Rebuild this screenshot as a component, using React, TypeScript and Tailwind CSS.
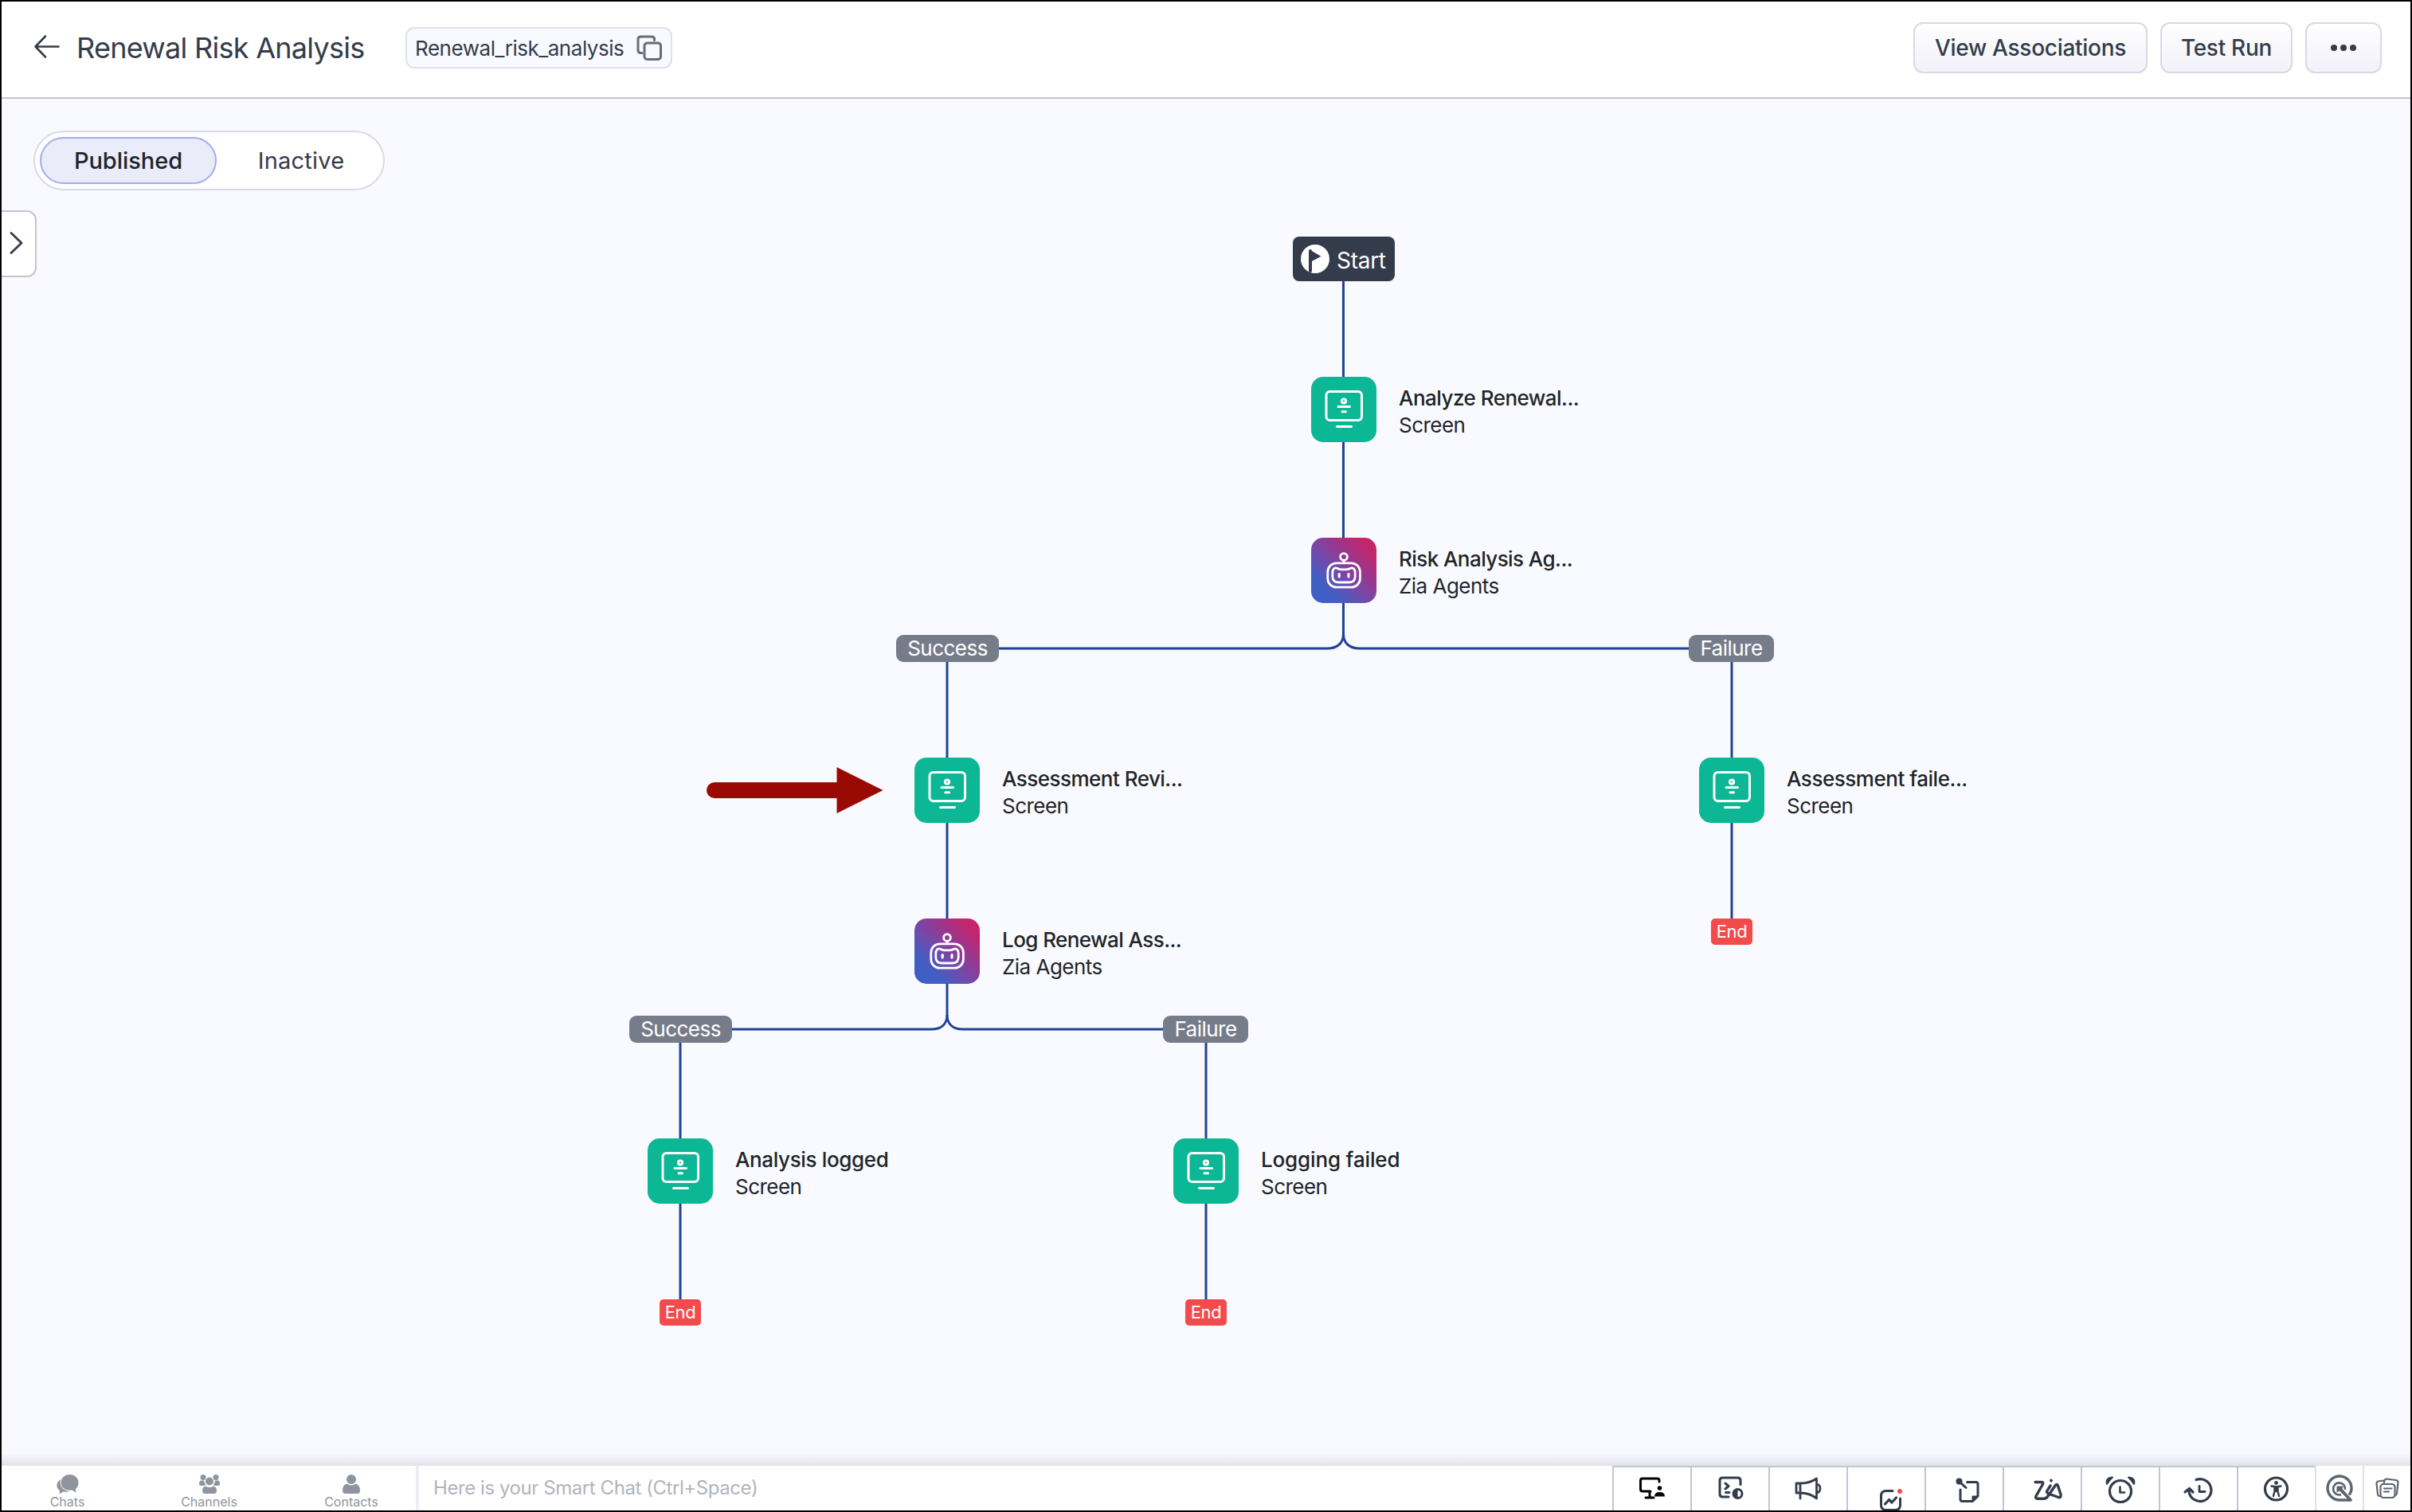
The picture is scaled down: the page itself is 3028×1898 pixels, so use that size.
import { type ReactNode } from "react";
import { clsx } from "clsx";

type NodeKind = "screen" | "agent";

const nodes: { x: number; y: number; kind: NodeKind; title: string; sub: string; tracking: string }[] = [
  { x: 1644, y: 349, kind: "screen", title: "Analyze Renewal...", sub: "Screen", tracking: "tracking-[-0.02em]" },
  { x: 1644, y: 551, kind: "agent", title: "Risk Analysis Ag...", sub: "Zia Agents", tracking: "tracking-[-0.022em]" },
  { x: 1146, y: 827, kind: "screen", title: "Assessment Revi...", sub: "Screen", tracking: "tracking-[-0.02em]" },
  { x: 2131, y: 827, kind: "screen", title: "Assessment faile...", sub: "Screen", tracking: "tracking-[-0.018em]" },
  { x: 1146, y: 1029, kind: "agent", title: "Log Renewal Ass...", sub: "Zia Agents", tracking: "tracking-[-0.022em]" },
  { x: 811, y: 1305, kind: "screen", title: "Analysis logged", sub: "Screen", tracking: "tracking-[-0.014em]" },
  { x: 1471, y: 1305, kind: "screen", title: "Logging failed", sub: "Screen", tracking: "tracking-[-0.006em]" },
];

const branches = [
  { x: 1123, y: 673, w: 129, label: "Success" },
  { x: 2118, y: 673, w: 107, label: "Failure" },
  { x: 788, y: 1151, w: 129, label: "Success" },
  { x: 1458, y: 1151, w: 107, label: "Failure" },
];

const ends = [
  { x: 2146, y: 1029 },
  { x: 826, y: 1507 },
  { x: 1486, y: 1507 },
];

const edges = [
  "M1684.5 229V349",
  "M1684.5 431V551",
  "M1684.5 633V672C1684.5 684 1676 690 1664 690H1252",
  "M1684.5 672C1684.5 684 1693 690 1705 690H2118",
  "M1187 707V827",
  "M1187 909V1029",
  "M2172 707V827",
  "M2172 909V1029",
  "M1187 1111V1150C1187 1162 1179 1168 1167 1168H917",
  "M1187 1150C1187 1162 1195 1168 1207 1168H1458",
  "M852 1185V1305",
  "M852 1387V1507",
  "M1512 1185V1305",
  "M1512 1387V1507",
];

function ScreenIcon() {
  return (
    <svg width="82" height="82" viewBox="0 0 82 82" fill="none" stroke="white" strokeWidth="3" strokeLinecap="round">
      <rect x="19" y="18.5" width="44.5" height="36" rx="4.5" />
      <circle cx="41" cy="30.5" r="2.6" />
      <path d="M34 37.5H48.5M39 43.8H43.5M32.5 62.5H50.5" />
    </svg>
  );
}

function AgentIcon() {
  return (
    <svg width="82" height="82" viewBox="0 0 82 82" fill="none" stroke="white" strokeWidth="2.8" strokeLinecap="round">
      <circle cx="41" cy="24" r="4.4" />
      <path d="M41 28.5V31" />
      <rect x="20.8" y="31.8" width="40.6" height="30.4" rx="11" />
      <path d="M33 38.5C36 40.4 46 40.4 49 38.5C53 36.6 55.2 40 55.2 44V48.5Q55.2 56 48 56H34Q26.8 56 26.8 48.5V44C26.8 40 29 36.6 33 38.5Z" />
      <path d="M35.2 45.5V49M47 45.5V49" strokeWidth="3.2" />
    </svg>
  );
}

function FlowNode({ x, y, kind, title, sub, tracking }: (typeof nodes)[number]) {
  return (
    <div className="absolute flex gap-7" style={{ left: x, top: y }}>
      <div
        className={clsx(
          "size-[82px] shrink-0 rounded-[15px]",
          kind === "screen"
            ? "bg-[#0bb795]"
            : "bg-[linear-gradient(45deg,#3f5fc4_22%,#6e4cad_42%,#913a94_60%,#c4256b_86%)]"
        )}
      >
        {kind === "screen" ? <ScreenIcon /> : <AgentIcon />}
      </div>
      <div className="pt-[10px] text-[26px] leading-[34px] whitespace-nowrap text-[#212529]">
        <p className={clsx("font-medium", tracking)}>{title}</p>
        <p className="tracking-[-0.02em]">{sub}</p>
      </div>
    </div>
  );
}

function Header() {
  return (
    <header className="flex h-[122px] shrink-0 items-center border-b-2 border-[#c4c3d6] bg-white pr-9 pb-1 pl-10 text-[#343c4b]">
      <div className="flex flex-1 items-center">
        <svg className="mb-1" width="34" height="32" viewBox="0 0 34 32" fill="none" stroke="#343c4b" strokeWidth="2.6" strokeLinecap="round" strokeLinejoin="round">
          <path d="M15 3.5L2.5 16.5L15 29.5M2.5 16.5H31.5" />
        </svg>
        <h1 className="ml-[20px] w-[413px] text-[36px] leading-[44px] tracking-[-0.02em] whitespace-nowrap">Renewal Risk Analysis</h1>
        <div className="flex h-[52px] w-[335px] items-center justify-between rounded-[11px] border-2 border-[#dfe1e9] bg-[#f9faff] pr-[10px] pl-[10px]">
          <span className="text-[26px] tracking-[-0.018em] whitespace-nowrap">Renewal_risk_analysis</span>
          <svg width="34" height="34" viewBox="0 0 34 34" fill="none" stroke="#666d7a" strokeWidth="3" strokeLinecap="round">
            <path d="M8 23.5H6.5Q3 23.5 3 20V6Q3 3 6.5 3H20Q23.5 3 23.5 6V7.5" />
            <rect x="11" y="11" width="20.5" height="20.5" rx="3.5" />
          </svg>
        </div>
      </div>
      <div className="flex gap-4">
        <HeaderButton className="w-[294px]">View Associations</HeaderButton>
        <HeaderButton className="w-[166px]">Test Run</HeaderButton>
        <HeaderButton className="w-[96px] gap-1">
          <i className="size-2 rounded-full bg-[#343c4b]" />
          <i className="size-2 rounded-full bg-[#343c4b]" />
          <i className="size-2 rounded-full bg-[#343c4b]" />
        </HeaderButton>
      </div>
    </header>
  );
}

function HeaderButton({ className, children }: { className: string; children: ReactNode }) {
  return (
    <button
      className={clsx(
        "flex h-16 items-center justify-center rounded-xl border-2 border-[#d9d8e8] bg-linear-to-b from-white to-[#f1f1f8] text-[28px] font-medium tracking-[-0.01em] whitespace-nowrap",
        className
      )}
    >
      {children}
    </button>
  );
}

function Canvas() {
  return (
    <main className="relative flex-1 overflow-hidden bg-[#f9faff]">
      <div className="ml-10 flex pt-10">
        <div className="flex h-[75px] w-[441px] items-center rounded-full border-2 border-[#dad9e8] bg-white px-[6px] text-[29px] text-[#343c4b]">
          <span className="flex h-[59px] w-[222px] items-center justify-center rounded-full border-2 border-[#a9a8f0] bg-[#ebecfa] font-medium tracking-[-0.002em] text-[#212529]">
            Published
          </span>
          <span className="flex-1 pl-[9px] text-center tracking-[0.007em]">Inactive</span>
        </div>
      </div>
      <button className="mt-[25px] flex h-[84px] w-11 items-center rounded-r-xl border-2 border-l-0 border-[#c4c3d6] bg-white pb-[3px] pl-[9px]">
        <svg width="20" height="32" viewBox="0 0 20 32" fill="none" stroke="#343c4b" strokeWidth="2.8" strokeLinecap="round" strokeLinejoin="round">
          <path d="M3 3.5L16 16L3 28.5" />
        </svg>
      </button>

      <svg className="absolute top-0 left-0" width="3024" height="1716" viewBox="0 0 3024 1716" fill="none">
        <g stroke="#204297" strokeWidth="3">
          {edges.map((d) => (
            <path key={d} d={d} />
          ))}
        </g>
        <path d="M895 858H1048.5V839L1106.5 868L1048.5 897V878H895A10 10 0 0 1 895 858Z" fill="#990a04" />
      </svg>

      <div className="absolute top-[173px] left-[1621px] flex h-14 w-32 items-center rounded-lg bg-[#343c4b] pl-[10px] text-[28px] tracking-[-0.01em] text-white">
        <svg width="36" height="36" viewBox="0 0 36 36">
          <circle cx="18" cy="18" r="18" fill="white" />
          <path d="M12 8V33" stroke="#343c4b" strokeWidth="4" strokeLinecap="round" />
          <path d="M12 7L25.5 14.8L13 21.5Z" fill="#343c4b" />
        </svg>
        <span className="mt-[3px] ml-[9px]">Start</span>
      </div>

      {nodes.map((node) => (
        <FlowNode key={`${node.x}-${node.y}`} {...node} />
      ))}
      {branches.map(({ x, y, w, label }) => (
        <div
          key={`${x}-${y}`}
          className="absolute flex h-[34px] items-center justify-center rounded-[9px] bg-[#767c89] text-[26px] leading-none tracking-[-0.02em] text-white"
          style={{ left: x, top: y, width: w }}
        >
          {label}
        </div>
      ))}
      {ends.map(({ x, y }) => (
        <div
          key={`${x}-${y}`}
          className="absolute flex h-[33px] w-[52px] items-center justify-center rounded-[5px] bg-[#f24b4b] pb-px text-[22px] leading-none tracking-[-0.02em] text-white"
          style={{ left: x, top: y }}
        >
          End
        </div>
      ))}
      <div className="absolute inset-x-0 bottom-0 h-4 bg-linear-to-b from-transparent to-[#e2e3ea]" />
    </main>
  );
}

const chatTabs = [
  {
    label: "Chats",
    width: "w-[165px]",
    icon: (
      <svg width="30" height="26" viewBox="0 0 30 26" fill="#90949c">
        <path d="M6 7C2 10 1 13 1.5 16C2 18.5 3.500 20 5 21L4.5 25.5L9.5 22.5C12 23 15 23 17 22C9 21 4 15 6 7Z" />
        <path d="M17.5 1C24 1 28.5 5.5 28.5 11C28.5 14.5 27 17.5 25 19L25.5 23.5L20.5 20.5C12 22 6.5 17 6.5 11C6.5 5.5 11 1 17.5 1Z" />
      </svg>
    ),
  },
  {
    label: "Channels",
    width: "w-[191px]",
    icon: (
      <svg width="28" height="26" viewBox="0 0 28 26" fill="#90949c">
        <circle cx="6" cy="4.5" r="3.5" />
        <circle cx="22" cy="4.5" r="3.5" />
        <circle cx="14" cy="9.5" r="5" />
        <path d="M3 8.5H7Q7.5 12 9.5 14L7 15H3Q1 15 1 12.5Q1 9 3 8.5ZM25 8.5H21Q20.5 12 18.5 14L21 15H25Q27 15 27 12.5Q27 9 25 8.5Z" />
        <path d="M9 15.5Q14 18.5 19 15.5Q23 16.5 23 21Q23 25 20 25H8Q5 25 5 21Q5 16.5 9 15.5Z" />
      </svg>
    ),
  },
  {
    label: "Contacts",
    width: "w-[166px]",
    icon: (
      <svg width="24" height="26" viewBox="0 0 24 26" fill="#90949c">
        <circle cx="12" cy="7" r="6" />
        <path d="M6.5 12.5Q12 16.5 17.5 12.5Q23 14 23 21Q23 25 19.5 25H4.5Q1 25 1 21Q1 14 6.5 12.5Z" />
      </svg>
    ),
  },
];

// each drawing fills its 96x54 cell
const tools: { name: string; icon: ReactNode }[] = [
  {
    name: "screen-share",
    icon: (
      <g stroke="#000">
        <path d="M57 18V16.5Q57 14 54.5 14H36Q33.5 14 33.5 16.5V27.5Q33.5 30 36 30H46M45 30V38M40 38H50" />
        <circle cx="57.5" cy="26" r="2.8" fill="#000" stroke="none" />
        <path d="M51 36.5Q51 31 57.5 31Q64 31 64 36.5Z" fill="#000" stroke="none" />
      </g>
    ),
  },
  {
    name: "developer",
    icon: (
      <g>
        <path d="M61 21.5V16.5Q61 13 57.5 13H38.5Q35 13 35 16.5V33.5Q35 37 38.5 37H46" />
        <path d="M42 20L46 23.5L42 27M42.5 31.5H47" />
        <circle cx="57.5" cy="33" r="5.5" />
        <path d="M57 28V38Q52 37 52 33Q52 29 57 28Z" fill="#343c4b" strokeWidth="1" />
      </g>
    ),
  },
  {
    name: "announcements",
    icon: (
      <path d="M33 20H38Q50 20 58.5 14V39Q50 32 38 32H33ZM38 20V39M59 21Q63 22 63 26.5Q63 31 59 32" strokeWidth="2.8" />
    ),
  },
  {
    name: "analytics",
    icon: (
      <g>
        <path d="M56 29.5H48Q41.5 29.5 41.5 36V47Q41.5 53.5 48 53.5H59Q65.5 53.5 65.5 47V39" />
        <path d="M46.500 46L51.5 40.5L55 44L60.5 38" strokeWidth="3.2" />
        <circle cx="65" cy="30" r="3" fill="#f8454c" stroke="none" />
      </g>
    ),
  },
  {
    name: "sticky-note",
    icon: (
      <g transform="translate(9.5 0)">
        <circle cx="32" cy="17.5" r="4" fill="#343c4b" stroke="none" />
        <path d="M33 18.5L40.5 25.5M42 18.5H53Q55.5 18.5 55.5 21V36L49 42.5H36Q33.5 42.5 33.5 40V28" />
        <path d="M48.5 43V36H56Z" fill="#343c4b" strokeWidth="1" />
      </g>
    ),
  },
  {
    name: "zia",
    icon: (
      <g strokeWidth="3.4">
        <path d="M39 18.500H47Q49.500 18.500 48.500 21L40 36Q38.500 39 42 39.300H50Q53 39.300 55 36L64 23Q66 20 67.500 23L71 34Q72 38.500 68 37.500L55.500 33Q52 31 54.500 28.500L58 23" />
        <circle cx="59" cy="16.5" r="2" fill="#343c4b" stroke="none" />
      </g>
    ),
  },
  {
    name: "reminders",
    icon: (
      <g strokeWidth="3.2">
        <circle cx="48" cy="30" r="13.5" />
        <path d="M47.5 24.5V31.5H53" strokeWidth="2.6" />
        <path d="M31 21Q29 13 38 12.5Q35 15 31 21ZM65 21Q67 13 58 12.5Q61 15 65 21Z" fill="#343c4b" strokeWidth="2" />
      </g>
    ),
  },
  {
    name: "recent",
    icon: (
      <g strokeWidth="3.2">
        <path d="M45 15.5A14 14 0 1 1 36 30M31 31L36.5 26.5L41 31" />
        <path d="M49 23.5V30.5H56" strokeWidth="2.8" />
      </g>
    ),
  },
  {
    name: "accessibility",
    icon: (
      <g strokeWidth="3.2">
        <circle cx="47.5" cy="27" r="14" />
        <circle cx="47.5" cy="19.5" r="2.4" fill="#343c4b" stroke="none" />
        <path d="M41.5 23.5L47.5 24.5L53.5 23.5M45.5 25V30L44 36M49.5 25V30L51 36M47.5 25V30" strokeWidth="2.4" />
      </g>
    ),
  },
];

function BottomBar() {
  return (
    <footer className="flex h-14 shrink-0 bg-white">
      <div className="flex w-[524px] shrink-0 border-r-4 border-[#eeeef6]">
        {chatTabs.map((tab) => (
          <div key={tab.label} className={clsx("flex shrink-0 flex-col items-center pt-[10px]", tab.width)}>
            {tab.icon}
            <span className="text-[16px] leading-[18px] text-[#90949c]">{tab.label}</span>
          </div>
        ))}
      </div>
      <div className="flex flex-1 items-center pl-[18px] text-[24px] tracking-[-0.018em] text-[#b2b4bd]">
        Here is your Smart Chat (Ctrl+Space)
      </div>
      <div className="flex border-t-2 border-[#c4c3d6]">
        {tools.map((tool) => (
          <div key={tool.name} className="h-[54px] w-[98px] border-l-2 border-[#c4c3d6]">
            <svg width="96" height="54" viewBox="0 0 96 54" fill="none" stroke="#343c4b" strokeWidth="3" strokeLinecap="round" strokeLinejoin="round">
              {tool.icon}
            </svg>
          </div>
        ))}
      </div>
      <div className="w-[60px] border-l-2 border-[#e0e1ea]">
        <svg width="58" height="56" viewBox="0 0 58 56" fill="none" stroke="#5f6571" strokeWidth="3.4" strokeLinejoin="round">
          <path d="M44 43H29A15 15 0 1 1 44 28.5Q44 33 41 36.5" />
          <path d="M31 36A7.5 7.5 0 1 1 36 30" strokeWidth="2.6" />
          <path d="M26 26H33L32 29L45 43H41L29 31L26 33Z" fill="#5f6571" strokeWidth="1" />
        </svg>
      </div>
      <div className="w-[60px] border-l-2 border-[#e0e1ea]">
        <svg width="58" height="56" viewBox="0 0 58 56" fill="none" stroke="#5f6571" strokeWidth="2.2" strokeLinecap="round" strokeLinejoin="round">
          <rect x="20.5" y="23" width="18" height="17" rx="3.5" />
          <path d="M25 28.5H34.500M25 32.5H31" />
          <path d="M20 38H18.5Q17.500 38 17 36L15.500 22Q15.500 20 17.500 19.500L24 18.500M24.500 22.500L25.500 18.500Q26 16.500 28 16.500L40 18Q42.500 18.500 42.500 20.500L41 35Q40.500 37 38.500 37.500" />
        </svg>
      </div>
    </footer>
  );
}

export default function App() {
  return (
    <div className="flex h-[1898px] w-[3028px] flex-col overflow-hidden border-2 border-black bg-white font-[Inter,sans-serif]">
      <Header />
      <Canvas />
      <BottomBar />
    </div>
  );
}
